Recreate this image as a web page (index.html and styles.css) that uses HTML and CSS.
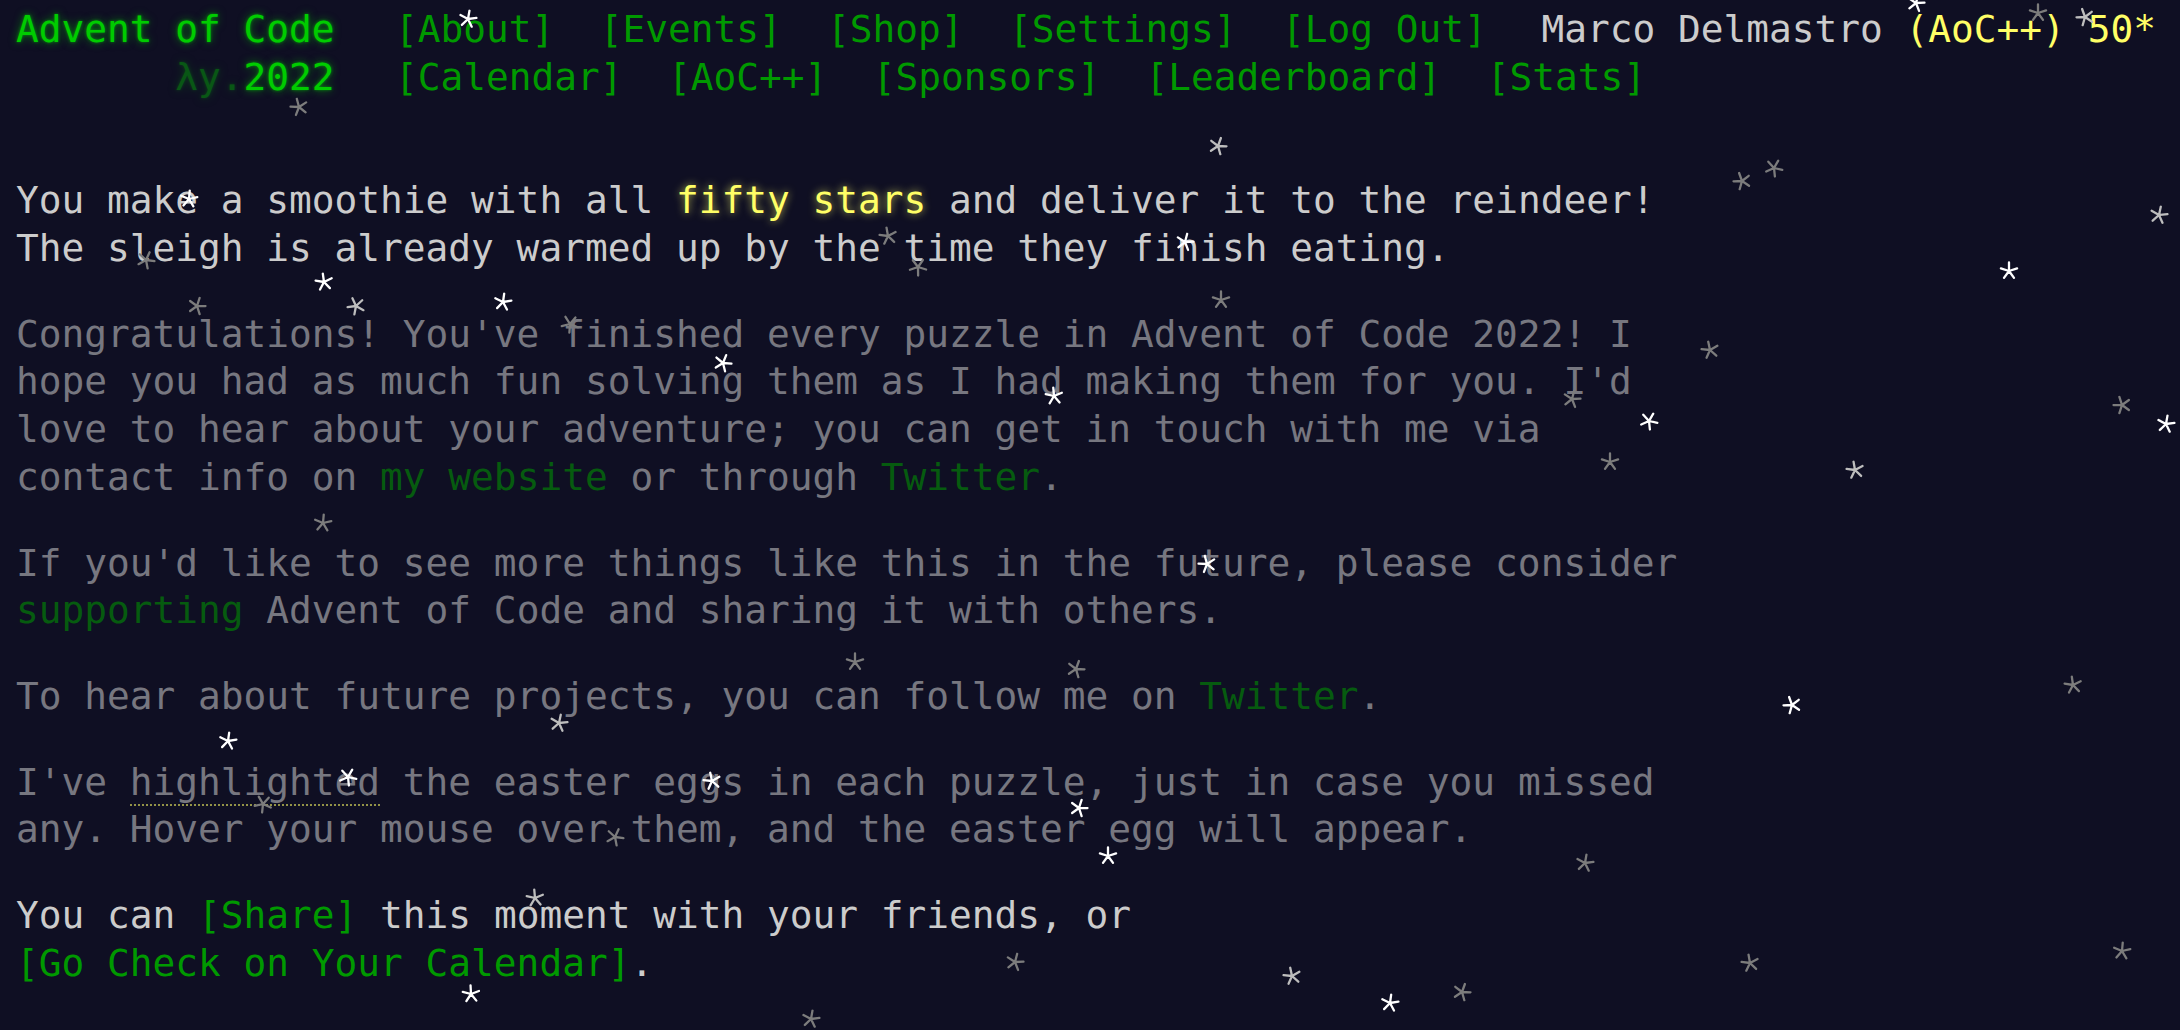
FILE: index.html
```html
<!DOCTYPE html>
<html lang="en">
<head>
<meta charset="utf-8">
<title>Advent of Code 2022</title>
<link rel="stylesheet" href="styles.css">
</head>
<body>
<svg class="defs" width="0" height="0" aria-hidden="true">
  <symbol id="star" viewBox="-10 -10 20 20">
    <path d="M0 0V-8.5M0 0L8.1 -2.6M0 0L5 6.9M0 0L-5 6.9M0 0L-8.1 -2.6" fill="none" stroke="currentColor" stroke-width="2.3" stroke-linecap="round"/>
  </symbol>
</svg>
<header class="site-header">
  <div class="header-row">
    <h1 class="title"><a href="#">Advent of Code</a></h1>
    <nav class="nav"><ul class="nav-list"><li><a href="#">[About]</a></li><li><a href="#">[Events]</a></li><li><a href="#">[Shop]</a></li><li><a href="#">[Settings]</a></li><li><a href="#">[Log Out]</a></li></ul></nav>
    <div class="user">Marco Delmastro <a href="#" class="supporter-badge">(AoC++)</a> <span class="star-count">50*</span></div>
  </div>
  <div class="header-row">
    <h1 class="title">&nbsp;&nbsp;&nbsp;&nbsp;&nbsp;&nbsp;&nbsp;<span class="title-event-wrap">λy.</span><a href="#">2022</a></h1>
    <nav class="nav"><ul class="nav-list"><li><a href="#">[Calendar]</a></li><li><a href="#">[AoC++]</a></li><li><a href="#">[Sponsors]</a></li><li><a href="#">[Leaderboard]</a></li><li><a href="#">[Stats]</a></li></ul></nav>
  </div>
</header>
<main class="main">
  <article class="article">
    <p>You make a smoothie with all <em class="star">fifty stars</em> and deliver it to the reindeer! The sleigh is already warmed up by the time they finish eating.</p>
    <p class="quiet">Congratulations! You've finished every puzzle in Advent of Code 2022! I hope you had as much fun solving them as I had making them for you. I'd love to hear about your adventure; you can get in touch with me via contact info on <a href="#">my website</a> or through <a href="#">Twitter</a>.</p>
    <p class="quiet">If you'd like to see more things like this in the future, please consider <a href="#">supporting</a> Advent of Code and sharing it with others.</p>
    <p class="quiet">To hear about future projects, you can follow me on <a href="#">Twitter</a>.</p>
    <p class="quiet">I've <span class="egg" title="Here's an easter egg!">highlighted</span> the easter eggs in each puzzle, just in case you missed any. Hover your mouse over them, and the easter egg will appear.</p>
    <p>You can <span class="share">[Share]</span> this moment with your friends, or <a href="#" class="nowrap">[Go Check on Your Calendar]</a>.</p>
  </article>
</main>
<div class="snow" aria-hidden="true">
  <svg class="flake flake-w" style="left:468px;top:19px;transform:rotate(10deg)"><use href="#star"/></svg>
  <svg class="flake flake-g" style="left:299px;top:107px;transform:rotate(-15deg)"><use href="#star"/></svg>
  <svg class="flake flake-l" style="left:1218px;top:146px;transform:rotate(20deg)"><use href="#star"/></svg>
  <svg class="flake flake-w" style="left:189px;top:199px;transform:rotate(5deg)"><use href="#star"/></svg>
  <svg class="flake flake-g" style="left:1774px;top:168px;transform:rotate(30deg)"><use href="#star"/></svg>
  <svg class="flake flake-g" style="left:1742px;top:181px;transform:rotate(-20deg)"><use href="#star"/></svg>
  <svg class="flake flake-l" style="left:2159px;top:215px;transform:rotate(12deg)"><use href="#star"/></svg>
  <svg class="flake flake-g" style="left:146px;top:260px;transform:rotate(25deg)"><use href="#star"/></svg>
  <svg class="flake flake-g" style="left:888px;top:236px;transform:rotate(-10deg)"><use href="#star"/></svg>
  <svg class="flake flake-w" style="left:1185px;top:242px;transform:rotate(15deg)"><use href="#star"/></svg>
  <svg class="flake flake-g" style="left:918px;top:267px;transform:rotate(35deg)"><use href="#star"/></svg>
  <svg class="flake flake-w" style="left:2009px;top:271px;transform:rotate(0deg)"><use href="#star"/></svg>
  <svg class="flake flake-w" style="left:324px;top:282px;transform:rotate(-8deg)"><use href="#star"/></svg>
  <svg class="flake flake-g" style="left:197px;top:306px;transform:rotate(18deg)"><use href="#star"/></svg>
  <svg class="flake flake-l" style="left:356px;top:306px;transform:rotate(-25deg)"><use href="#star"/></svg>
  <svg class="flake flake-w" style="left:503px;top:302px;transform:rotate(8deg)"><use href="#star"/></svg>
  <svg class="flake flake-g" style="left:1221px;top:300px;transform:rotate(0deg)"><use href="#star"/></svg>
  <svg class="flake flake-g" style="left:570px;top:324px;transform:rotate(40deg)"><use href="#star"/></svg>
  <svg class="flake flake-g" style="left:1710px;top:350px;transform:rotate(-12deg)"><use href="#star"/></svg>
  <svg class="flake flake-w" style="left:723px;top:363px;transform:rotate(22deg)"><use href="#star"/></svg>
  <svg class="flake flake-w" style="left:1054px;top:396px;transform:rotate(-5deg)"><use href="#star"/></svg>
  <svg class="flake flake-g" style="left:1572px;top:399px;transform:rotate(15deg)"><use href="#star"/></svg>
  <svg class="flake flake-w" style="left:1649px;top:421px;transform:rotate(30deg)"><use href="#star"/></svg>
  <svg class="flake flake-g" style="left:2122px;top:405px;transform:rotate(-18deg)"><use href="#star"/></svg>
  <svg class="flake flake-w" style="left:2166px;top:424px;transform:rotate(10deg)"><use href="#star"/></svg>
  <svg class="flake flake-g" style="left:1610px;top:462px;transform:rotate(0deg)"><use href="#star"/></svg>
  <svg class="flake flake-l" style="left:1855px;top:470px;transform:rotate(-10deg)"><use href="#star"/></svg>
  <svg class="flake flake-g" style="left:323px;top:523px;transform:rotate(5deg)"><use href="#star"/></svg>
  <svg class="flake flake-w" style="left:1207px;top:564px;transform:rotate(-15deg)"><use href="#star"/></svg>
  <svg class="flake flake-g" style="left:855px;top:662px;transform:rotate(0deg)"><use href="#star"/></svg>
  <svg class="flake flake-g" style="left:1076px;top:669px;transform:rotate(20deg)"><use href="#star"/></svg>
  <svg class="flake flake-g" style="left:2073px;top:685px;transform:rotate(-8deg)"><use href="#star"/></svg>
  <svg class="flake flake-l" style="left:559px;top:723px;transform:rotate(12deg)"><use href="#star"/></svg>
  <svg class="flake flake-w" style="left:1792px;top:705px;transform:rotate(-20deg)"><use href="#star"/></svg>
  <svg class="flake flake-w" style="left:228px;top:741px;transform:rotate(8deg)"><use href="#star"/></svg>
  <svg class="flake flake-w" style="left:348px;top:777px;transform:rotate(30deg)"><use href="#star"/></svg>
  <svg class="flake flake-w" style="left:712px;top:781px;transform:rotate(-12deg)"><use href="#star"/></svg>
  <svg class="flake flake-w" style="left:1079px;top:808px;transform:rotate(18deg)"><use href="#star"/></svg>
  <svg class="flake flake-g" style="left:263px;top:804px;transform:rotate(-30deg)"><use href="#star"/></svg>
  <svg class="flake flake-g" style="left:615px;top:837px;transform:rotate(25deg)"><use href="#star"/></svg>
  <svg class="flake flake-w" style="left:1108px;top:856px;transform:rotate(0deg)"><use href="#star"/></svg>
  <svg class="flake flake-g" style="left:1585px;top:863px;transform:rotate(10deg)"><use href="#star"/></svg>
  <svg class="flake flake-l" style="left:535px;top:898px;transform:rotate(-5deg)"><use href="#star"/></svg>
  <svg class="flake flake-g" style="left:1015px;top:962px;transform:rotate(15deg)"><use href="#star"/></svg>
  <svg class="flake flake-g" style="left:1750px;top:963px;transform:rotate(-10deg)"><use href="#star"/></svg>
  <svg class="flake flake-g" style="left:2122px;top:951px;transform:rotate(5deg)"><use href="#star"/></svg>
  <svg class="flake flake-l" style="left:1292px;top:976px;transform:rotate(-12deg)"><use href="#star"/></svg>
  <svg class="flake flake-g" style="left:1462px;top:992px;transform:rotate(20deg)"><use href="#star"/></svg>
  <svg class="flake flake-w" style="left:1390px;top:1003px;transform:rotate(8deg)"><use href="#star"/></svg>
  <svg class="flake flake-w" style="left:471px;top:994px;transform:rotate(-3deg)"><use href="#star"/></svg>
  <svg class="flake flake-g" style="left:811px;top:1019px;transform:rotate(10deg)"><use href="#star"/></svg>
  <svg class="flake flake-w" style="left:1916px;top:3px;transform:rotate(15deg)"><use href="#star"/></svg>
  <svg class="flake flake-g" style="left:2038px;top:13px;transform:rotate(0deg)"><use href="#star"/></svg>
  <svg class="flake flake-l" style="left:2085px;top:17px;transform:rotate(-20deg)"><use href="#star"/></svg>
</div>
</body>
</html>
```
FILE: styles.css
```css
* {
  box-sizing: border-box;
}

html {
  background: #0f0f23;
}

body {
  margin: 0;
  padding: 6px 16px 0;
  min-height: 1030px;
  overflow: hidden;
  background: #0f0f23;
  color: #cccccc;
  font-family: "DejaVu Sans Mono", "Liberation Mono", monospace;
  font-size: 37.8px;
  line-height: 47.8px;
}

.defs {
  position: absolute;
  width: 0;
  height: 0;
}

a {
  color: #009900;
  text-decoration: none;
}

.site-header {
  white-space: nowrap;
  margin-bottom: 2em;
}

.header-row {
  display: flex;
  align-items: baseline;
}

.title {
  margin: 0;
  padding-right: 1em;
  font-size: 1em;
  font-weight: normal;
  white-space: pre;
}

.title a,
.title span {
  color: #00cc00;
  text-shadow: 0 0 3px rgba(0, 204, 0, 0.6), 0 0 8px rgba(0, 204, 0, 0.6);
}

.title-event-wrap {
  opacity: 0.38;
}

.nav-list {
  list-style: none;
  margin: 0;
  padding: 0;
  display: flex;
}

.nav-list li {
  padding: 0 0.6em;
}

.user {
  padding-left: 0.85em;
}

.supporter-badge,
.star-count {
  color: #ffff66;
}

.article {
  width: 45em;
  margin: 2em 0;
}

.article p {
  margin: 1em 0;
}

.star {
  font-style: normal;
  color: #ffff66;
  text-shadow: 0 0 8px rgba(255, 255, 102, 0.7);
}

.quiet {
  opacity: 0.55;
}

.egg {
  border-bottom: 2px dotted #ffff66;
}

.share {
  color: #009900;
}

.nowrap {
  white-space: nowrap;
}

.snow {
  position: fixed;
  inset: 0;
  pointer-events: none;
}

.flake {
  position: absolute;
  width: 20px;
  height: 20px;
  margin: -10px 0 0 -10px;
  overflow: visible;
}

.flake-w {
  color: #ffffff;
}

.flake-l {
  color: #bdbdbd;
}

.flake-g {
  color: #7c7c7c;
}
```
